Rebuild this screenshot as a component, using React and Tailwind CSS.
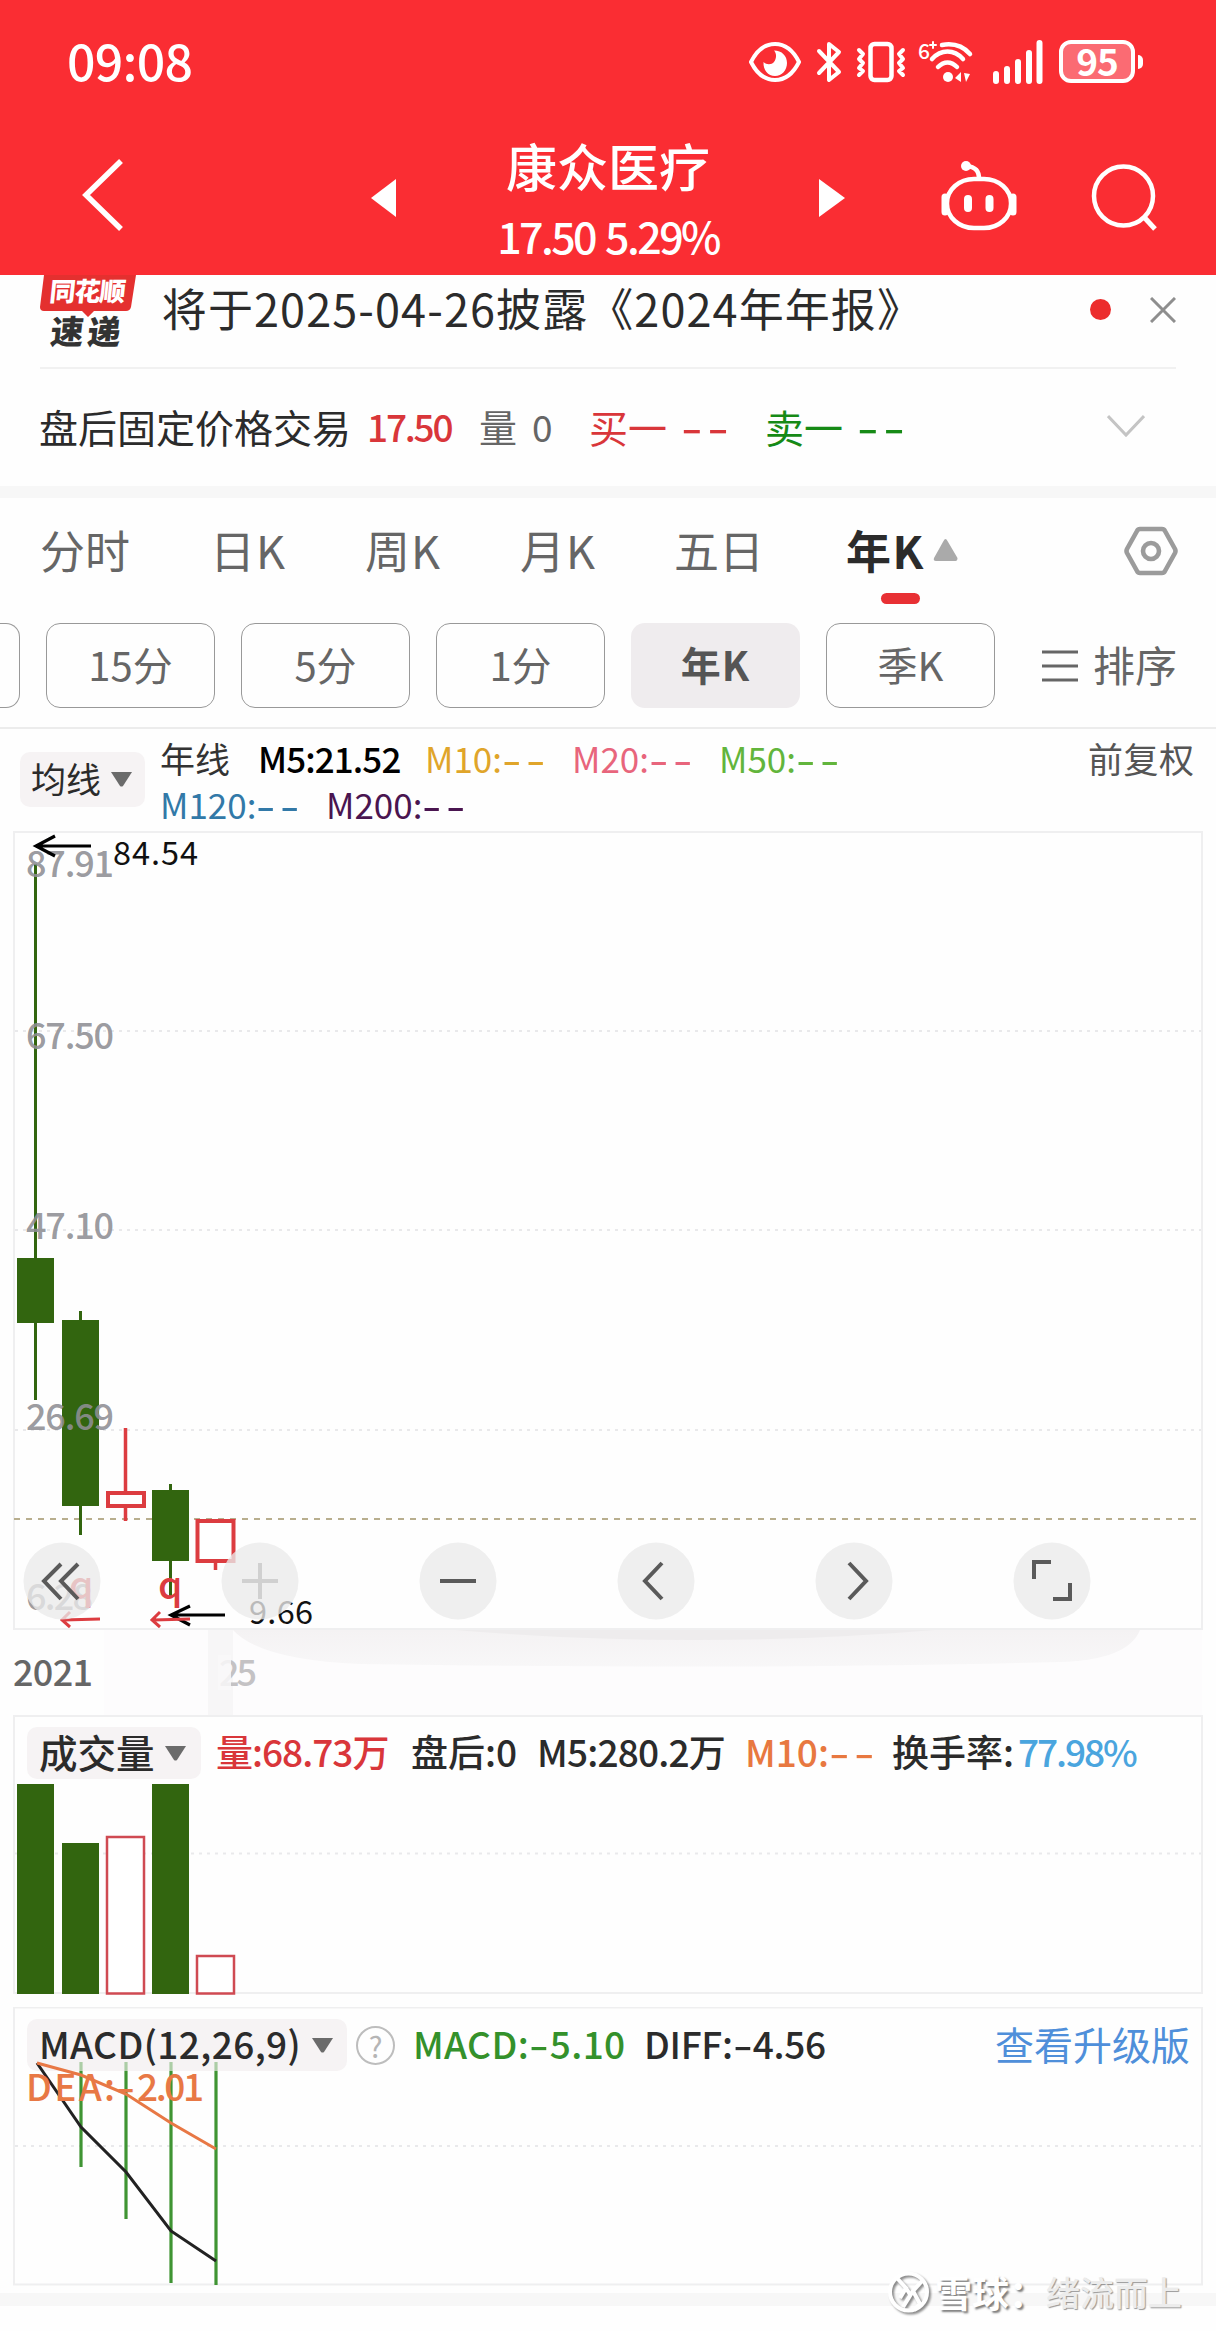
import React from 'react';

const RED = '#dc3c40';
const GREEN = '#32650f';

function StatusIcons() {
  return (
    <div className="flex items-center">
      {/* eye */}
      <svg className="block h-[42px] w-[52px]" viewBox="0 0 52 42" fill="none">
        <path d="M2 21C8 9 17 3 26 3s18 6 24 18C44 33 35 39 26 39S8 33 2 21Z" stroke="#fff" strokeWidth="4" />
        <path d="M25 9.500c8 0 13 5.500 13 12.500S33 35 26 35 14 29 14.500 21c3 3 8 3 10.500 0 2.500-3.500 3-8 0-11.500Z" fill="#fff" />
      </svg>
      {/* bluetooth */}
      <svg className="ml-[15px] block h-[42px] w-[26px]" viewBox="0 0 26 42" fill="none" stroke="#fff" strokeWidth="4" strokeLinejoin="round" strokeLinecap="round">
        <path d="M3 10l20 21-10 8V3l10 8L3 32" />
      </svg>
      {/* vibrate */}
      <svg className="ml-[14px] block h-[42px] w-[50px]" viewBox="0 0 50 42" fill="none" stroke="#fff" strokeLinecap="round" strokeLinejoin="round">
        <rect x="14.500" y="3" width="21" height="36" rx="4" strokeWidth="4.5" />
        <path d="M3 9l4 4-4 5 4 4-4 5 4 3-4 4M47 9l-4 4 4 5-4 4 4 5-4 3 4 4" strokeWidth="4" />
      </svg>
      {/* wifi */}
      <svg className="ml-[12px] block h-[44px] w-[56px] overflow-visible" viewBox="0 0 56 44" fill="none" stroke="#fff" strokeWidth="4.500" strokeLinecap="round">
        <path d="M24 5c11-2 20 0 28 9M14 19c9-10 22-10 31 0M20 27c6-6 13-6 19 0" />
        <circle cx="30" cy="37" r="5" fill="#fff" stroke="none" />
        <path d="M43 32v10l-6-4zM46 33l6 1-4 8z" fill="#fff" stroke="none" />
        <text x="0" y="19" fontSize="21" fontWeight="500" fontFamily="Noto Sans CJK SC" fill="#fff" stroke="none">6</text>
        <path d="M15 2v6M12 5h6" strokeWidth="2" />
      </svg>
      {/* signal */}
      <svg className="ml-[19px] block h-[46px] w-[50px]" viewBox="0 0 50 46" stroke="#fff" strokeWidth="6" strokeLinecap="round">
        <path d="M3 35v7M14 30v12M25 23v19M36 14v28M46.500 4v38" />
      </svg>
      <div className="ml-[16px] flex h-[43px] w-[76px] items-center justify-center rounded-[12px] border-4 border-white bg-[#fb6b73] pb-[3px] text-[37px] leading-none font-bold tracking-[-1px] text-white">95</div>
      <div className="ml-[3px] h-[14px] w-[5px] rounded-r-full bg-white" />
    </div>
  );
}

function Header() {
  return (
    <header className="h-[275px] w-full bg-[#fa2d33] text-white">
      <div className="flex h-[123px] items-center justify-between pr-[73px] pl-[67px]">
        <span className="mt-[-5px] text-[50px] leading-none font-medium tracking-[-0.7px]">09:08</span>
        <StatusIcons />
      </div>
      <div className="flex h-[152px] items-start">
        <svg className="mt-[36px] ml-[82px] block h-[72px] w-[42px]" viewBox="0 0 42 72" fill="none" stroke="#fff" strokeWidth="5.500">
          <path d="M39 2L4 36l35 34" />
        </svg>
        <svg className="mt-[56px] ml-[247px] block h-[38px] w-[26px]" viewBox="0 0 26 38" fill="#fff"><path d="M0 19L25 0v38z" /></svg>
        <div className="ml-[80px] flex w-[262px] flex-col items-center">
          <span className="mt-[14px] text-[51px] leading-[56px] font-medium whitespace-nowrap">康众医疗</span>
          <span className="mt-[12px] text-[43px] leading-[60px] font-medium tracking-[-2.6px] whitespace-nowrap [word-spacing:3px]">17.50 5.29%</span>
        </div>
        <svg className="mt-[56px] ml-[80px] block h-[38px] w-[26px]" viewBox="0 0 26 38" fill="#fff"><path d="M26 19L0 0v38z" /></svg>
        <svg className="mt-[38px] ml-[95px] block h-[70px] w-[78px]" viewBox="-1 0 78 70" fill="none" stroke="#fff" strokeWidth="4.500">
          <rect x="6" y="18" width="64" height="49" rx="27" ry="24" />
          <path d="M38 18C38 10 35 6 25 5" />
          <circle cx="25" cy="5" r="5" fill="#fff" stroke="none" />
          <path d="M4 36v15M72 36v15" strokeWidth="7" strokeLinecap="round" />
          <path d="M27 38v9M48.500 38v9" strokeWidth="8" strokeLinecap="round" />
        </svg>
        <svg className="mt-[41px] ml-[73px] block h-[67px] w-[68px]" viewBox="0 0 68 67" fill="none" stroke="#fff" strokeWidth="4.500">
          <circle cx="32.500" cy="32" r="29.500" />
          <path d="M52 52l12 13" strokeWidth="5" />
        </svg>
      </div>
    </header>
  );
}

function News() {
  return (
    <div className="mx-[40px] flex h-[94px] items-start border-b-2 border-[#f1f1f1]">
      <div className="relative h-[72px] w-[96px]">
        <svg className="absolute inset-0" width="96" height="72" viewBox="0 0 96 72">
          <path d="M4 0h92l-5 32q-1 4-5 4H54l-6 6-6-6H4q-4 0-4-4z" fill="#e4302f" />
        </svg>
        <div className="relative -skew-x-6 pl-[10px] text-[26px] leading-[30px] font-black tracking-[-1px] whitespace-nowrap text-white">同花顺</div>
        <div className="relative mt-[10px] -skew-x-6 pl-[11px] text-[33px] leading-[30px] font-black tracking-[4px] whitespace-nowrap text-[#333]">速递</div>
      </div>
      <span className="ml-[26px] w-[900px] text-[45px] leading-[66px] tracking-[1.1px] whitespace-nowrap text-[#2b2b2b]">将于2025-04-26披露《2024年年报》</span>
      <span className="mt-[24px] ml-[30px] h-[21px] w-[21px] shrink-0 rounded-full bg-[#ec2c2c]" />
      <svg className="mt-[22px] ml-[39px] block shrink-0" width="26" height="26" viewBox="0 0 26 26" stroke="#8e8e8e" strokeWidth="3"><path d="M1 1l24 24M25 1L1 25" /></svg>
    </div>
  );
}

function Dashes() {
  return <span className="inline-block origin-left scale-x-[1.55] font-medium tracking-[3px]">--</span>;
}

function AfterHours() {
  return (
    <div className="flex h-[117px] items-center pb-[3px] pl-[39px] text-[39px] leading-none whitespace-nowrap">
      <span className="w-[328px] text-[#2b2b2b]">盘后固定价格交易</span>
      <span className="w-[112px] text-[37px] font-medium tracking-[-2.2px] text-[#d9363a]">17.50</span>
      <span className="w-[53px] text-[38px] text-[#666]">量</span>
      <span className="w-[57px] text-[37px] text-[#666]">0</span>
      <span className="w-[92px] text-[#d9363a]">买一</span>
      <span className="w-[84px] text-[#d9363a]"><Dashes /></span>
      <span className="w-[92px] text-[#168a16]">卖一</span>
      <span className="w-[250px] text-[#168a16]"><Dashes /></span>
      <svg className="block" width="38" height="24" viewBox="0 0 38 24" fill="none" stroke="#c4c4c4" strokeWidth="3"><path d="M1 2l18 19L37 2" /></svg>
    </div>
  );
}

function Tabs() {
  return (
    <div className="flex h-[125px] items-start pt-[22px] pl-[40px] text-[45px] leading-[60px] whitespace-nowrap text-[#666]">
      <span className="w-[170px]">分时</span>
      <span className="w-[155px] tracking-[1px]">日K</span>
      <span className="w-[155px] tracking-[1px]">周K</span>
      <span className="w-[154px] tracking-[1px]">月K</span>
      <span className="w-[172px]">五日</span>
      <div className="w-[278px]">
        <div className="flex items-center">
          <span className="font-bold tracking-[1.5px] text-[#2b2b2b]">年K</span>
          <svg className="ml-[8px] block" width="25" height="22" viewBox="0 0 25 22" fill="#aaa"><path d="M12.500 0q1 0 2 2l10 17q0 3-2 3H3q-3 0-2-3L10.500 2q1-2 2-2z" /></svg>
        </div>
        <div className="mt-[13px] ml-[35px] h-[11px] w-[39px] rounded-full bg-[#e83034]" />
      </div>
      <svg className="mt-[6px] block" width="54" height="50" viewBox="0 0 54 50" fill="none" stroke="#9b9b9b" strokeWidth="4.600">
        <path d="M16 3h22q2 0 3 2l10 18q1 2 0 4L41 45q-1 2-3 2H16q-2 0-3-2L3 27q-1-2 0-4L13 5q1-2 3-2z" />
        <circle cx="27" cy="25" r="8" />
      </svg>
    </div>
  );
}

function Pills() {
  const base = 'flex h-[85px] w-[169px] shrink-0 items-center justify-center rounded-[14px] pb-[3px] leading-none whitespace-nowrap ';
  return (
    <div className="flex h-[106px] items-start border-b-2 border-[#ececec] text-[40px] text-[#666]">
      <div className="h-[85px] w-[20px] shrink-0 rounded-r-[14px] border border-l-0 border-[#999]" />
      <div className={base + 'ml-[26px] border border-[#999]'}>15分</div>
      <div className={base + 'ml-[26px] border border-[#999]'}>5分</div>
      <div className={base + 'ml-[26px] border border-[#999]'}>1分</div>
      <div className={base + 'ml-[26px] bg-[#efecee] font-bold tracking-[1px] text-[#555]'}>年K</div>
      <div className={base + 'ml-[26px] border border-[#999]'}>季K</div>
      <svg className="mt-[27px] ml-[47px] block" width="36" height="32" viewBox="0 0 36 32" stroke="#666" strokeWidth="3"><path d="M0 2h36M0 16h36M0 30h36" /></svg>
      <span className="ml-[15px] text-[42px] leading-[81px]">排序</span>
    </div>
  );
}

function Caret() {
  return <svg className="block shrink-0" width="21" height="15" viewBox="0 0 21 15" fill="#6b6b6b"><path d="M0 0h21L12 14q-1.500 1-3 0z" /></svg>;
}

function Averages() {
  return (
    <div className="flex h-[102px] items-start whitespace-nowrap">
      <div className="mt-[23px] ml-[20px] flex h-[55px] w-[125px] items-center rounded-[10px] bg-[#f6f3f4] pl-[11px]">
        <span className="mt-[-4px] mr-[10px] text-[35px] leading-none text-[#2b2b2b]">均线</span>
        <Caret />
      </div>
      <div className="ml-[15px] text-[35px] leading-[45px]">
        <div className="mt-[6px] flex">
          <span className="w-[98px] text-[#333]">年线</span>
          <span className="w-[167px] font-medium tracking-[-0.9px] text-black">M5:21.52</span>
          <span className="w-[147px] text-[#e0a52a]">M10:<Dashes /></span>
          <span className="w-[147px] text-[#e8657c]">M20:<Dashes /></span>
          <span className="w-[369px] text-[#62b53c]">M50:<Dashes /></span>
          <span className="tracking-[0.5px] text-[#555]">前复权</span>
        </div>
        <div className="mt-[1px] flex">
          <span className="w-[166px] text-[#3279a8]">M120:<Dashes /></span>
          <span className="text-[#4a1550]">M200:<Dashes /></span>
        </div>
      </div>
    </div>
  );
}

const axisLabels = [
  ['87.91', 877],
  ['67.50', 1049],
  ['47.10', 1239],
  ['26.69', 1430],
];

const roundButtons = [
  { x: 62, d: 'M61 1564l-17 17 17 18M78 1564l-17 17 17 18' },
  { x: 260, d: 'M242 1581h36M260 1563v36', faded: true },
  { x: 458, d: 'M440 1581h36' },
  { x: 656, d: 'M662 1563l-17 18 17 18' },
  { x: 854, d: 'M849 1563l17 18-17 18' },
  { x: 1052, d: 'M1034 1579v-17h17M1070 1583v16h-17' },
];

function Frame({ x, y, w, h }) {
  return <rect x={x} y={y} width={w} height={h} fill="none" stroke="#efeff0" strokeWidth="2" />;
}

function PriceChart() {
  return (
    <svg className="block" width="1216" height="884" viewBox="0 831 1216 884" fontFamily="Noto Sans CJK SC, sans-serif">
      <defs>
        <linearGradient id="shade" x1="0" y1="0" x2="0" y2="1">
          <stop offset="0" stopColor="#f4f2f3" />
          <stop offset="1" stopColor="#f8f7f8" />
        </linearGradient>
      </defs>
      <rect x="104" y="1630" width="1098" height="85" fill="#fdfcfd" />
      <rect x="208" y="1630" width="25" height="85" fill="#f7f6f7" />
      <path d="M233 1630h907q-12 30-80 32q-300 8-700 2q-100-4-127-34z" fill="url(#shade)" />
      <path d="M455 1630h480q-240 20-480 0z" fill="#eeeced" />
      <Frame x="14" y="832" w="1188" h="797" />
      <path d="M15 1031h1186M15 1230h1186M15 1430h1186" stroke="#e9e9eb" strokeWidth="2" strokeDasharray="3 5" />
      <path d="M14 1519h1188" stroke="#b8ae8e" strokeWidth="2" strokeDasharray="6 6" />

      <g fill={GREEN} stroke={GREEN}>
        <path d="M35.500 864V1400M80.500 1311v224M170.500 1484v112" strokeWidth="3" />
        <g stroke="none">
          <rect x="17" y="1258" width="37" height="65" />
          <rect x="62" y="1320" width="37" height="186" />
          <rect x="152" y="1490" width="37" height="71" />
        </g>
      </g>
      <g fill="none" stroke={RED} strokeWidth="4">
        <rect x="108" y="1493" width="36" height="13" />
        <path d="M125.500 1428v64M125.500 1507v14M215.500 1562v8" strokeWidth="3.500" />
        <rect x="197.500" y="1521" width="36" height="40" fill="#fff" />
      </g>

      <g fill="#8f8f94" fillOpacity="0.900" fontSize="36" fontWeight="500">
        {axisLabels.map(([t, y]) => <text key={t} x="26" y={y} textLength="88">{t}</text>)}
        <text x="26" y="1610" textLength="67">6.28</text>
      </g>

      <g fill="none" stroke="#000" strokeWidth="3.200">
        <path d="M91 846H37M55 836l-19 10 19 10" />
        <path d="M225 1615h-53M190 1606l-19 9 19 10" />
      </g>
      <g fill="#111" fontSize="32.500">
        <text x="113" y="865" textLength="85">84.54</text>
        <text x="249" y="1624" textLength="64">9.66</text>
      </g>

      <g fill="none" stroke={RED} strokeWidth="3">
        <path d="M100 1619l-37 1M70 1612l-8 8 8 7M190 1619l-37 1M160 1612l-8 8 8 7" />
      </g>
      <g fill={RED} fontSize="39" fontWeight="500">
        <text x="69" y="1599">q</text>
        <text x="158" y="1599">q</text>
      </g>

      {roundButtons.map((b) => (
        <g key={b.x}>
          <circle cx={b.x} cy="1581" r="38.500" fill="#ebebeb" fillOpacity="0.780" />
          <path d={b.d} fill="none" stroke={b.faded ? '#d0d0d0' : '#5a5a5a'} strokeWidth="4" />
        </g>
      ))}

      <g fontSize="36" fontWeight="500">
        <text x="13" y="1686" textLength="80" fill="#666">2021</text>
        <text x="219" y="1686" textLength="38" fill="#c4c2c4">25</text>
      </g>
      <rect x="218" y="1655" width="13" height="35" fill="#f9f8f9" fillOpacity="0.850" />
    </svg>
  );
}

function VolumePanel() {
  return (
    <section className="relative h-[292px] w-full">
      <svg className="absolute inset-0" width="1216" height="292" viewBox="0 1715 1216 292">
        <Frame x="14" y="1716" w="1188" h="277" />
        <path d="M15 1853.500h1186" stroke="#e9e9eb" strokeWidth="2" strokeDasharray="3 5" />
        <g fill={GREEN}>
          <rect x="17" y="1784" width="37" height="210" />
          <rect x="62" y="1843" width="37" height="151" />
          <rect x="152" y="1784" width="37" height="210" />
        </g>
        <g fill="#fff" stroke="#cf4a52" strokeWidth="2.500">
          <rect x="107" y="1837" width="37" height="156.500" />
          <rect x="197" y="1956" width="37" height="37.500" />
        </g>
      </svg>
      <div className="relative flex items-center pt-[12px] pl-[27px] text-[37px] leading-[46px] font-medium whitespace-nowrap text-[#2b2b2b]">
        <div className="flex h-[52px] w-[174px] items-center rounded-[10px] bg-[#f6f3f4] pl-[12px]">
          <span className="mt-[-4px] mr-[10px] text-[38.500px]">成交量</span>
          <Caret />
        </div>
        <span className="-mt-1 ml-[15px] w-[195px] tracking-[-1px] text-[#d9363a]">量:68.73万</span>
        <span className="-mt-1 w-[126px]">盘后:0</span>
        <span className="-mt-1 w-[208px] tracking-[-0.8px]">M5:280.2万</span>
        <span className="-mt-1 w-[147px] text-[#e87840]">M10:<Dashes /></span>
        <span className="-mt-1 w-[126px]">换手率:</span>
        <span className="-mt-1 tracking-[-2.1px] text-[#4aa5de]">77.98%</span>
      </div>
    </section>
  );
}

function Minus() {
  return <span className="mr-[7px] inline-block origin-left scale-x-[1.5]">-</span>;
}

function MacdPanel() {
  return (
    <section className="relative h-[286px] w-full">
      <div className="relative flex items-center pt-[12px] pl-[27px] text-[37px] leading-[46px] whitespace-nowrap text-[#2b2b2b]">
        <div className="flex h-[52px] w-[320px] items-center rounded-[10px] bg-[#f6f3f4] pl-[12px]">
          <span className="mt-[-4px] w-[273px] font-medium tracking-[0.4px]">MACD(12,26,9)</span>
          <Caret />
        </div>
        <div className="ml-[9px] flex h-[39px] w-[39px] items-center justify-center rounded-full border-2 border-[#bdbdbd] text-[29px] leading-none text-[#b5b5b5]">?</div>
        <span className="-mt-1 ml-[18px] w-[231px] font-medium tracking-[0.4px] text-[#34912b]">MACD:<Minus />5.10</span>
        <span className="-mt-1 w-[351px] font-medium tracking-[-0.3px]">DIFF:<Minus />4.56</span>
        <span className="-mt-1 text-[39px] text-[#4f8fda]">查看升级版</span>
      </div>
      <svg className="absolute inset-0" width="1216" height="286" viewBox="0 2007 1216 286" fontFamily="Noto Sans CJK SC, sans-serif">
        <Frame x="14" y="2007.500" w="1188" h="277" />
        <path d="M15 2146h1186" stroke="#e9e9eb" strokeWidth="2" strokeDasharray="3 5" />
        <g stroke="#3f9433" strokeWidth="3.200">
          <path d="M81 2071v96M126 2071v148M171 2071v212M216 2071v214" />
          <path d="M81 2062v9M126 2062v9M171 2062v9M216 2062v9" strokeOpacity="0.400" />
        </g>
        <path d="M37 2063l44 64 45 45 45 59 45 30" fill="none" stroke="#222" strokeWidth="3" />
        <path d="M37 2063l44 12 45 19 45 29 45 26" fill="none" stroke="#e87845" strokeWidth="3" />
        <g fontSize="37" fontWeight="500" fill="#e87845">
          <text x="26" y="2101" textLength="89">DEA:</text>
          <text transform="translate(116 2101) scale(1.450 1)">-</text>
          <text x="137" y="2101" textLength="67">2.01</text>
        </g>
      </svg>
    </section>
  );
}

function Watermark() {
  return (
    <div className="absolute top-[2269px] left-[887px] flex items-center whitespace-nowrap">
      <svg className="block drop-shadow-[2px_2px_1px_rgba(0,0,0,0.45)]" width="43" height="46" viewBox="0 0 43 46" fill="none" stroke="#fff" strokeWidth="4">
        <circle cx="21.500" cy="23" r="18.500" />
        <path d="M9 8l10 11-6 10M35 12l-9 10 7 13-6 6M19 19l5 8M26 22l-10 16" />
      </svg>
      <span className="ml-[5px] w-[111px] text-[37px] leading-[46px] font-bold text-white [text-shadow:2px_2px_2px_rgba(0,0,0,0.5)]">雪球：</span>
      <span className="text-[34px] leading-[46px] font-medium text-[#ececec] [text-shadow:1px_1px_1px_rgba(0,0,0,0.4)]">绪流而上</span>
    </div>
  );
}

export default function App() {
  return (
    <div className="relative h-[2331px] w-[1216px] overflow-hidden bg-[#fefefe] font-['Noto_Sans_CJK_SC',sans-serif]">
      <Header />
      <News />
      <AfterHours />
      <div className="h-[12px] bg-[#f7f7f7]" />
      <Tabs />
      <Pills />
      <Averages />
      <PriceChart />
      <VolumePanel />
      <MacdPanel />
      <div className="h-[13px] bg-[#f7f7f7]" />
      <Watermark />
    </div>
  );
}
